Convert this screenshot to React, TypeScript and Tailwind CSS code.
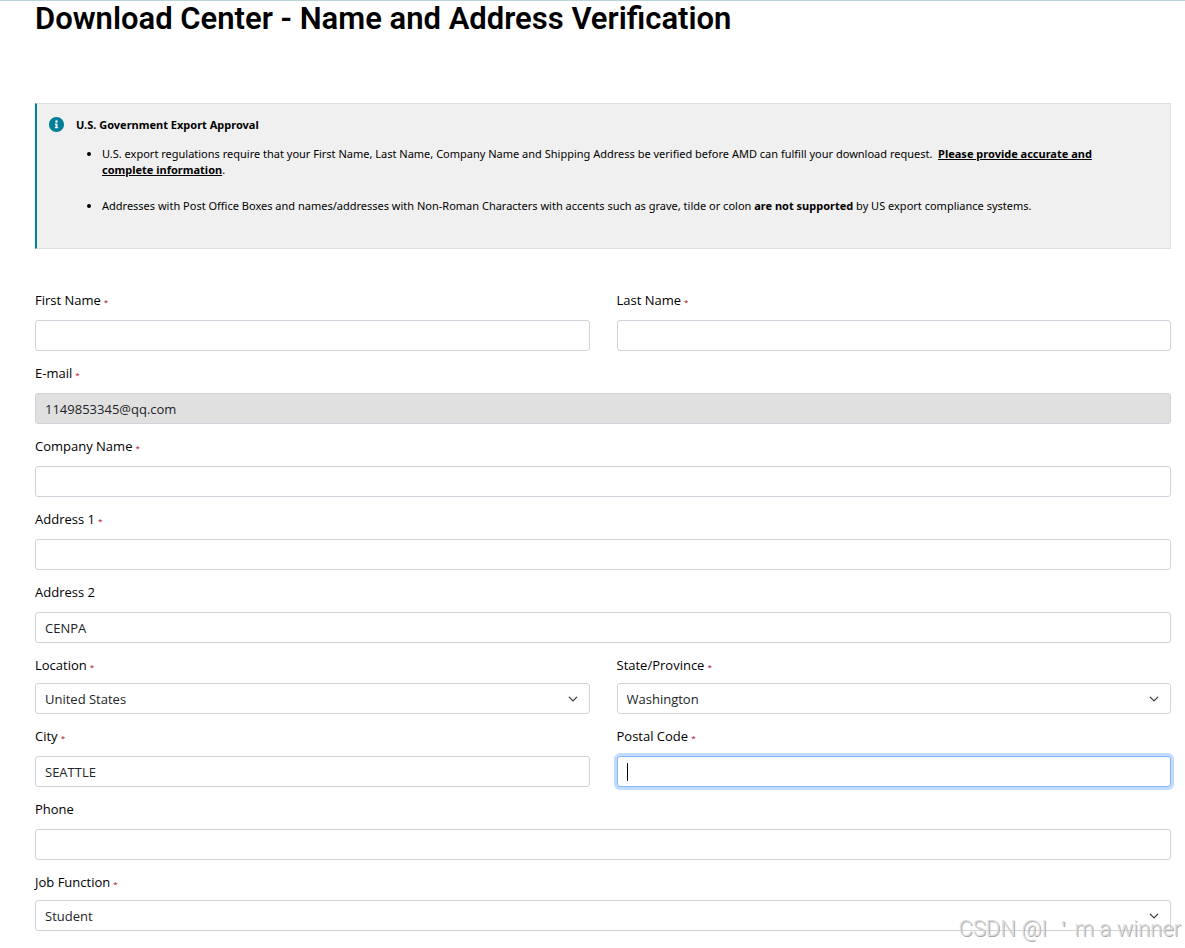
import { useState } from 'react';
import type { ReactNode } from 'react';

interface FieldProps {
  id: string;
  label: string;
  required?: boolean;
  compact?: boolean;
  children: ReactNode;
}

function Field({ id, label, required = false, compact = false, children }: FieldProps) {
  return (
    <div className={`flex flex-col ${compact ? 'gap-2' : 'gap-2.5'}`}>
      <label htmlFor={id} className="text-[13px] leading-5 text-black">
        {label}
        {required && <span className="ml-[3px] text-[8px] leading-none text-[#b00020]">*</span>}
      </label>
      {children}
    </div>
  );
}

interface TextFieldProps {
  id: string;
  label: string;
  type?: string;
  required?: boolean;
  disabled?: boolean;
  focused?: boolean;
  initialValue?: string;
}

function TextField({
  id,
  label,
  type = 'text',
  required = false,
  disabled = false,
  focused = false,
  initialValue = '',
}: TextFieldProps) {
  const [value, setValue] = useState(initialValue);

  return (
    <Field id={id} label={label} required={required}>
      <div className="relative">
        <input
          id={id}
          type={type}
          value={value}
          required={required}
          disabled={disabled}
          autoFocus={focused}
          onChange={(e) => setValue(e.target.value)}
          className={`block h-[31px] w-full rounded-[3px] border px-[9px] text-[13px] leading-5 text-[#212529] outline-none focus:border-[#86b7fe] focus:ring-3 focus:ring-[#c2dbfe] ${
            disabled ? 'border-[#ced4da] bg-[#e0e0e0]' : 'border-[#ced4da] bg-white'
          } ${focused ? 'caret-transparent' : ''}`}
        />
        {/* Steady caret */}
        {focused && value === '' && (
          <span className="pointer-events-none absolute top-[7px] left-2.5 h-[18px] w-px bg-black" />
        )}
      </div>
    </Field>
  );
}

interface SelectFieldProps {
  id: string;
  label: string;
  options: string[];
}

function SelectField({ id, label, options }: SelectFieldProps) {
  return (
    <Field id={id} label={label} required compact>
      <div className="relative">
        <select
          id={id}
          required
          className="block h-[31px] w-full appearance-none rounded-[3px] border border-[#ced4da] bg-white pr-8 pl-[9px] text-[13px] leading-5 text-[#212529] outline-none focus:border-[#86b7fe] focus:ring-3 focus:ring-[#c2dbfe]"
        >
          {options.map((option) => (
            <option key={option}>{option}</option>
          ))}
        </select>
        <svg
          viewBox="0 0 16 16"
          fill="none"
          stroke="#343a40"
          strokeWidth="2"
          strokeLinecap="round"
          strokeLinejoin="round"
          className="pointer-events-none absolute top-[11px] right-3 size-2.5"
        >
          <path d="m2 5 6 6 6-6" />
        </svg>
      </div>
    </Field>
  );
}

function InfoIcon() {
  return (
    <svg viewBox="8 8 496 496" className="size-[15px] shrink-0" fill="#007f98" aria-hidden="true">
      <path d="M256 8C119.043 8 8 119.083 8 256c0 136.997 111.043 248 248 248s248-111.003 248-248C504 119.083 392.957 8 256 8zm0 110c23.196 0 42 18.804 42 42s-18.804 42-42 42-42-18.804-42-42 18.804-42 42-42zm56 254c0 6.627-5.373 12-12 12h-88c-6.627 0-12-5.373-12-12v-24c0-6.627 5.373-12 12-12h12v-64h-12c-6.627 0-12-5.373-12-12v-24c0-6.627 5.373-12 12-12h64c6.627 0 12 5.373 12 12v100h12c6.627 0 12 5.373 12 12v24z" />
    </svg>
  );
}

export default function App() {
  return (
    <div className="relative min-h-screen border-t border-[#b9d3d9] bg-white pr-3.5 pb-[18px] pl-[35px] font-['Open_Sans',sans-serif] text-black">
      <h1 className="font-['Roboto',sans-serif] text-[31px] leading-9 font-semibold">
        Download Center - Name and Address Verification
      </h1>

      {/* Export notice */}
      <section className="mt-[66px] flex min-h-[146px] items-start gap-3 border border-l-2 border-[#dee0e1] border-l-[#007f98] bg-[#f0f0f0] pt-[13px] pr-10 pl-3 font-['Noto_Sans',sans-serif] text-[11px] leading-4">
        <InfoIcon />
        <div>
          <h2 className="font-bold">U.S. Government Export Approval</h2>
          <ul className="mt-[13px] list-disc space-y-5 pl-[26px]">
            <li>
              U.S. export regulations require that your First Name, Last Name, Company Name and
              Shipping Address be verified before AMD can fulfill your download request.&nbsp;{' '}
              <strong className="underline">Please provide accurate and complete information</strong>.
            </li>
            <li>
              Addresses with Post Office Boxes and names/addresses with Non-Roman Characters with
              accents such as grave, tilde or colon <strong>are not supported</strong> by US export
              compliance systems.
            </li>
          </ul>
        </div>
      </section>

      <form className="mt-[41px] flex flex-col gap-3">
        <div className="grid grid-cols-2 gap-x-[27px]">
          <TextField id="first-name" label="First Name" required />
          <TextField id="last-name" label="Last Name" required />
        </div>
        <TextField id="email" label="E-mail" type="email" required disabled initialValue="1149853345@qq.com" />
        <TextField id="company" label="Company Name" required />
        <TextField id="address-1" label="Address 1" required />
        <TextField id="address-2" label="Address 2" initialValue="CENPA" />
        <div className="grid grid-cols-2 gap-x-[27px]">
          <SelectField id="location" label="Location" options={['United States', 'Canada']} />
          <SelectField id="state" label="State/Province" options={['Washington', 'Oregon', 'California']} />
        </div>
        <div className="grid grid-cols-2 gap-x-[27px]">
          <TextField id="city" label="City" required initialValue="SEATTLE" />
          <TextField id="postal-code" label="Postal Code" required focused />
        </div>
        <TextField id="phone" label="Phone" type="tel" />
        <SelectField id="job-function" label="Job Function" options={['Student', 'Engineer', 'Educator']} />
      </form>

      {/* Watermark */}
      <p className="pointer-events-none absolute right-1 bottom-1.5 font-['Roboto',sans-serif] text-[22px] leading-7 font-light text-[#dcdcdc] [text-shadow:1px_1px_0_#aaaaaa]">
        CSDN @I ＇m a winner
      </p>
    </div>
  );
}
